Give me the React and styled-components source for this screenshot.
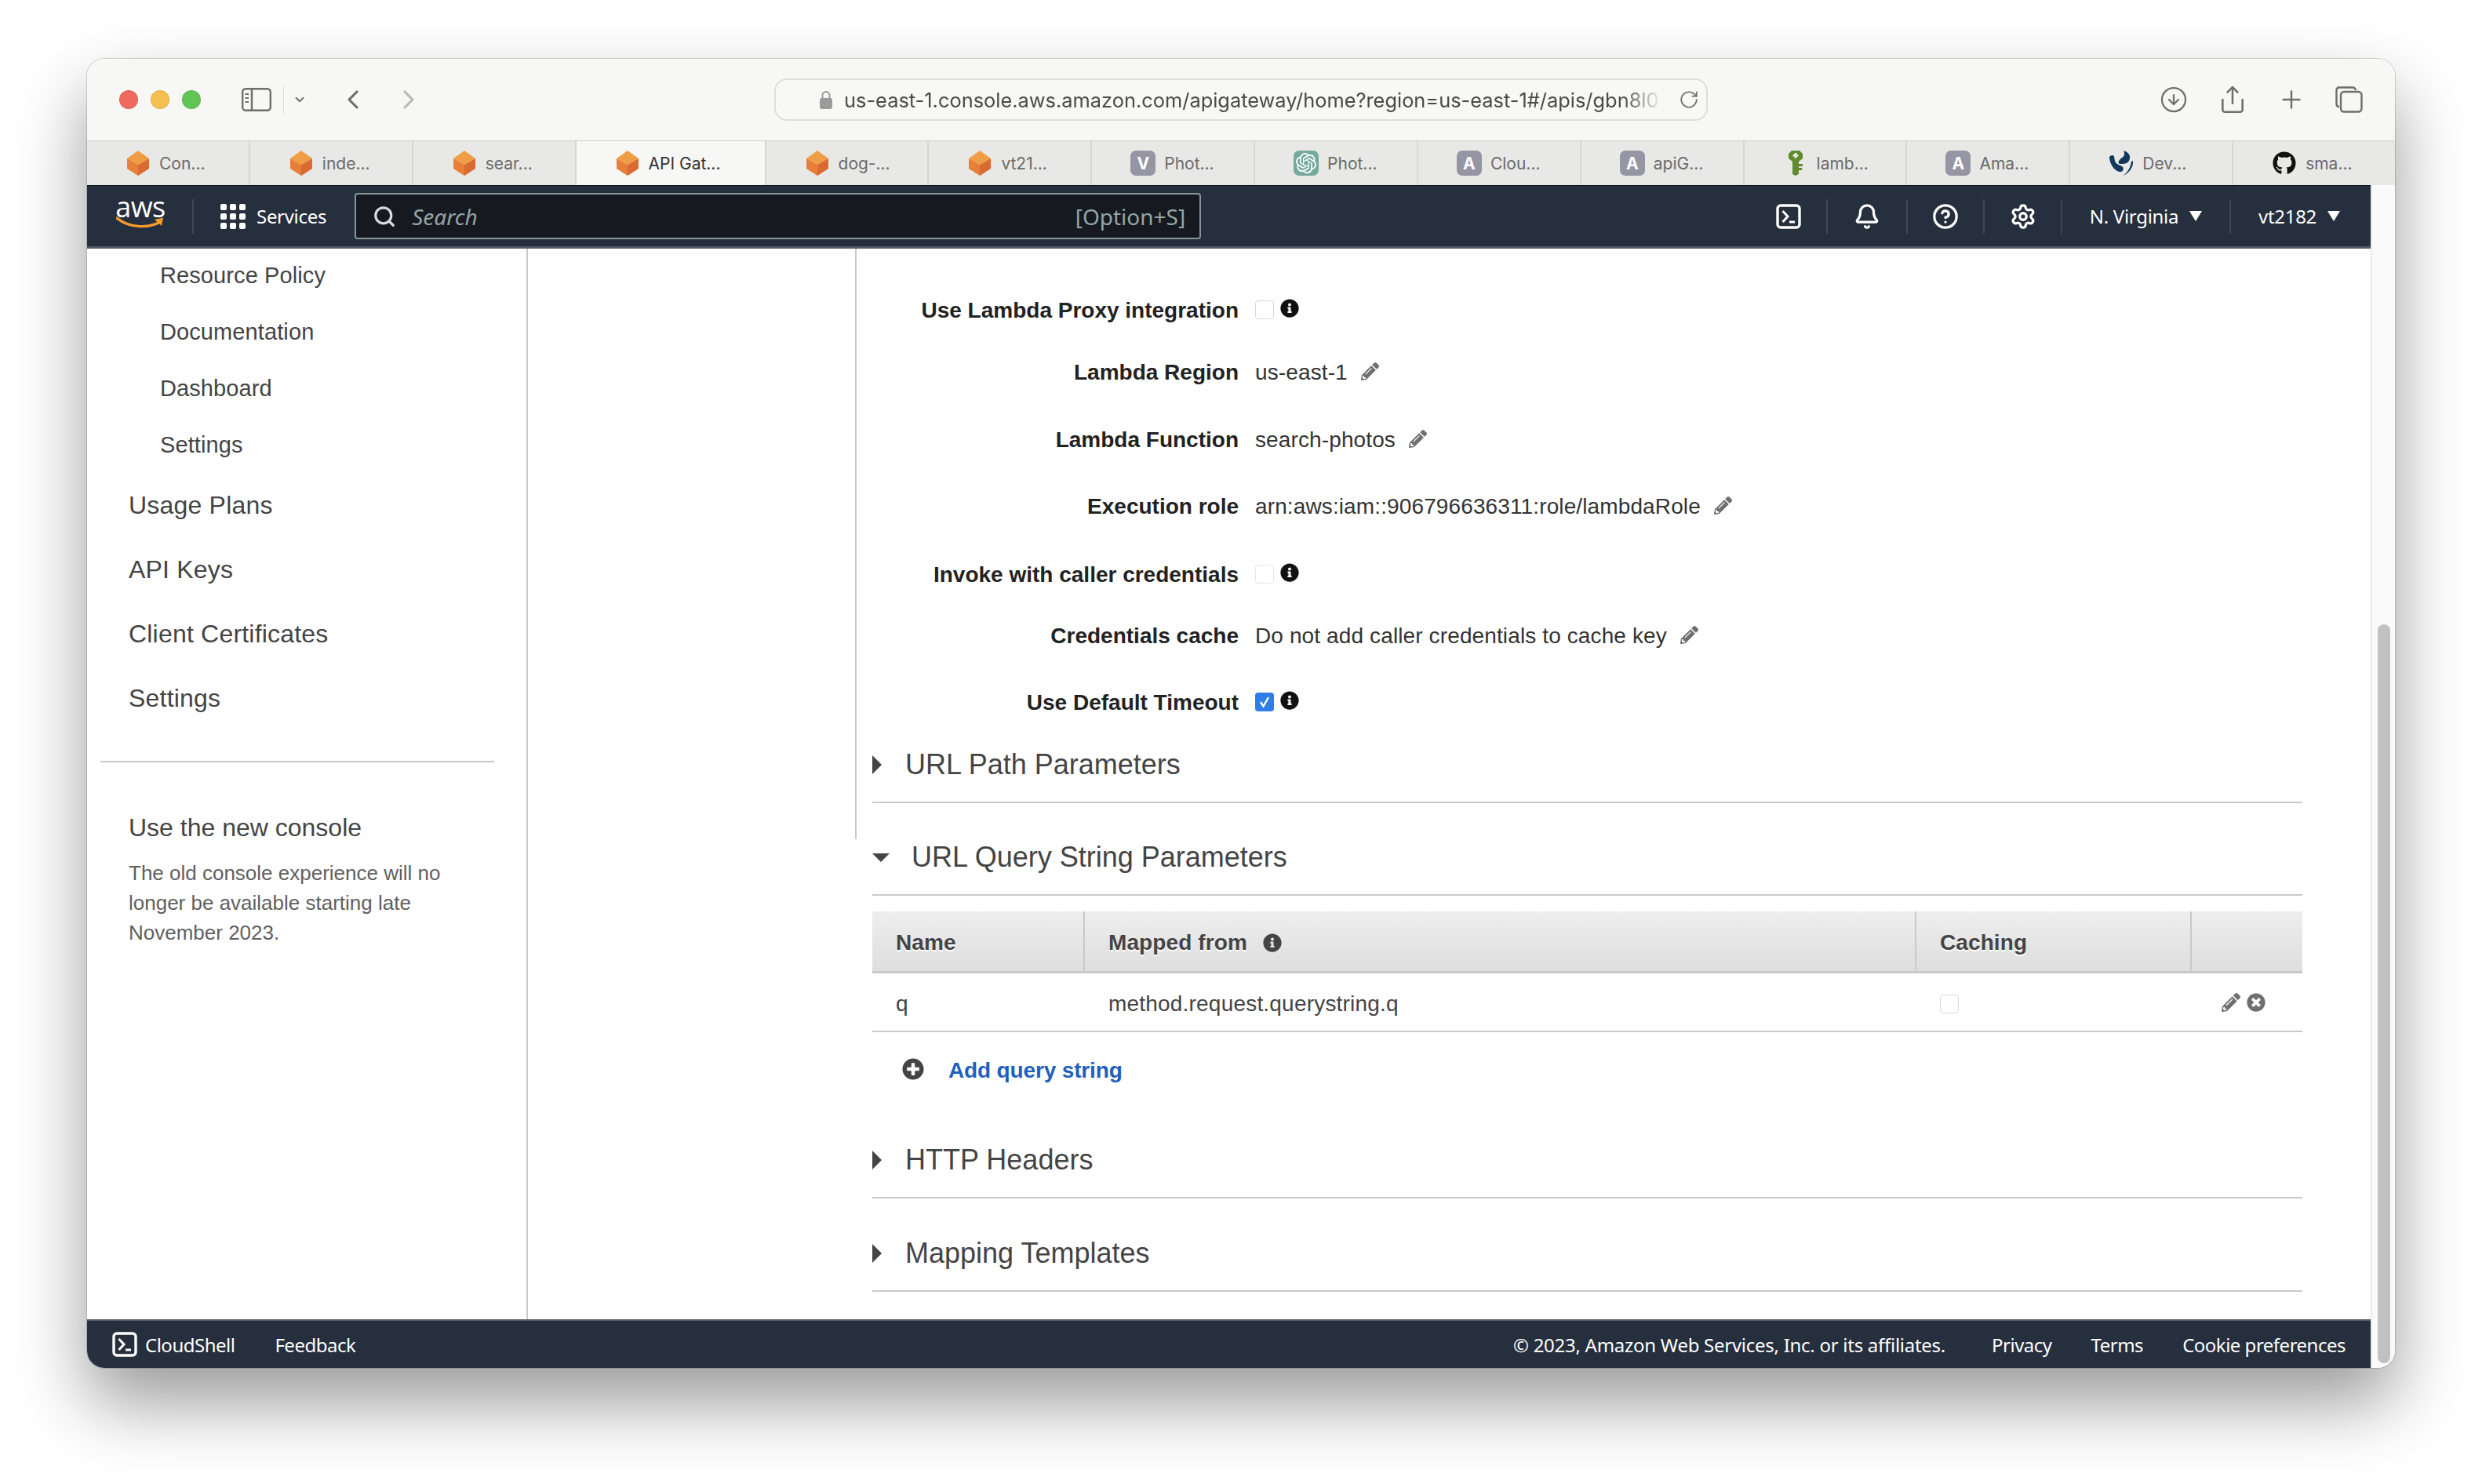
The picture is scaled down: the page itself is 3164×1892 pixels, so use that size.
import React from 'react';
import styled, { createGlobalStyle } from 'styled-components';
import { Bell, CircleHelp, Settings, Plus, Share, CircleArrowDown, ChevronDown, ChevronLeft, ChevronRight, RotateCw, Search } from 'lucide-react';
import { FaInfoCircle, FaPencilAlt, FaPlusCircle, FaTimesCircle, FaGithub } from 'react-icons/fa';
import { SiOpenai } from 'react-icons/si';

const tabs = [
    { id: 1, title: 'Con...', icon: 'cube' },
    { id: 2, title: 'inde...', icon: 'cube' },
    { id: 3, title: 'sear...', icon: 'cube' },
    { id: 4, title: 'API Gat...', icon: 'cube', active: true },
    { id: 5, title: 'dog-...', icon: 'cube' },
    { id: 6, title: 'vt21...', icon: 'cube' },
    { id: 7, title: 'Phot...', icon: 'V' },
    { id: 8, title: 'Phot...', icon: 'openai' },
    { id: 9, title: 'Clou...', icon: 'A' },
    { id: 10, title: 'apiG...', icon: 'A' },
    { id: 11, title: 'lamb...', icon: 'key' },
    { id: 12, title: 'Ama...', icon: 'A' },
    { id: 13, title: 'Dev...', icon: 'swirl' },
    { id: 14, title: 'sma...', icon: 'github' },
];

const subItems = ['Resource Policy', 'Documentation', 'Dashboard', 'Settings'];
const mainItems = ['Usage Plans', 'API Keys', 'Client Certificates', 'Settings'];

const fields = [
    { label: 'Use Lambda Proxy integration', gap: 59, check: 'off' },
    { label: 'Lambda Region', gap: 39, value: 'us-east-1' },
    { label: 'Lambda Function', gap: 46, value: 'search-photos' },
    { label: 'Execution role', gap: 45, value: 'arn:aws:iam::906796636311:role/lambdaRole' },
    { label: 'Invoke with caller credentials', gap: 47, check: 'disabled' },
    { label: 'Credentials cache', gap: 38, value: 'Do not add caller credentials to cache key' },
    { label: 'Use Default Timeout', gap: 45, check: 'on' },
];

const CubeIcon = () => (
    <svg width="28" height="32" viewBox="0 0 28 32">
        <path d="M14 0 L28 10 L14 18 L0 10 Z" fill="#f09e45" />
        <path d="M0 10 L14 18 L14 32 L0 23 Z" fill="#e67f37" />
        <path d="M28 10 L14 18 L14 32 L28 23 Z" fill="#da6a30" />
    </svg>
);

const KeyIcon = () => (
    <svg width="20" height="32" viewBox="0 0 20 32">
        <path d="M5 0 H15 L19 4 V10 L14 14 V17 H19 V20 H14 V22 H18 V25 H14 V30 L10 32 L6 30 V14 L1 10 V4 Z" fill="#5f8b2e" />
        <path d="M8.6 3 H11.4 V5 H13.4 V7.6 H11.4 V9.6 H8.6 V7.6 H6.6 V5 H8.6 Z" fill="#eef2e6" />
    </svg>
);

const SwirlIcon = () => (
    <svg width="32" height="32" viewBox="0 0 32 32">
        <path d="M19 0 C26 2 29 7 26 13 C24 17 19 17 15 17 C12 17 12 14 14 12 C16 9 20 8 20 5 C20 3 20 1 19 0 Z" fill="#12385a" />
        <path d="M1 9 C1 7 3 6 5 6 C8 6 7 10 8 13 C9 17 13 18 17 20 C20 22 19 26 16 27 C10 28 2 20 1 9 Z" fill="#12385a" />
        <path d="M31 13 C32 21 26 29 18 32 C24 28 28 22 29 14 Z" fill="#12385a" />
    </svg>
);

const TerminalIcon = () => (
    <svg width="32" height="32" viewBox="0 0 32 32" fill="none" stroke="#fff">
        <rect x="2" y="2" width="28" height="28" rx="4" strokeWidth="3.4" />
        <path d="M8.5 9 L15 16 L8.5 23" strokeWidth="3" />
        <path d="M17 23 H24" strokeWidth="3" />
    </svg>
);

const GridIcon = () => (
    <svg width="32" height="32" viewBox="0 0 32 32" fill="#fff">
        {[0, 12, 24].map(y => [0, 12, 24].map(x => (
            <rect key={`${x}-${y}`} x={x} y={y} width="8" height="8" rx="2" />
        )))}
    </svg>
);

const SidebarIcon = () => (
    <svg width="38" height="30" viewBox="0 0 38 30" fill="none" stroke="#6e6e6e" strokeWidth="2.4">
        <rect x="1.2" y="1.2" width="35.6" height="27.6" rx="4" />
        <path d="M13 1 V29" />
        <path d="M4.5 8 H9 M4.5 13 H9 M4.5 18 H9" strokeWidth="2" />
    </svg>
);

const LockIcon = () => (
    <svg width="16" height="24" viewBox="0 0 16 24">
        <path d="M3.5 11 V6.5 a4.5 4.5 0 0 1 9 0 V11" fill="none" stroke="#9b9b9b" strokeWidth="2" />
        <rect y="10" width="16" height="14" rx="2.4" fill="#9b9b9b" />
    </svg>
);

const TabsIcon = () => (
    <svg width="35" height="34" viewBox="0 0 35 34" fill="none" stroke="#6e6e6e" strokeWidth="2.4">
        <path d="M5 26 C2.5 26 1.5 25 1.5 22.5 V5 C1.5 2.8 2.8 1.5 5 1.5 H22 C24.5 1.5 25.6 2.6 26 5" />
        <rect x="7" y="7" width="26.5" height="25.5" rx="4" />
    </svg>
);

const AwsLogo = () => (
    <LogoWrap>
        <LogoText>aws</LogoText>
        <svg width="62" height="16" viewBox="0 0 62 16">
            <path d="M1 2 C16 14 40 16 56 7" fill="none" stroke="#f29b2c" strokeWidth="3.4" strokeLinecap="round" />
            <path d="M49 4 L60 1.5 L58 12" fill="#f29b2c" />
        </svg>
    </LogoWrap>
);

const TabIcon = ({ kind }) => {
    if (kind === 'cube') return <CubeIcon />;
    if (kind === 'key') return <KeyIcon />;
    if (kind === 'swirl') return <SwirlIcon />;
    if (kind === 'github') return <FaGithub size={30} color="#111" />;
    if (kind === 'openai') return <OpenAiBadge><SiOpenai size={26} color="#fff" /></OpenAiBadge>;
    return <LetterBadge>{kind}</LetterBadge>;
};

const App = () => {
    return (
        <>
            <GlobalStyle />
            <Window>
                <Toolbar>
                    <Lights>
                        <Light $color="#ef6a5f" />
                        <Light $color="#f5bf4f" />
                        <Light $color="#61c554" />
                    </Lights>
                    <SidebarButton>
                        <SidebarIcon />
                    </SidebarButton>
                    <ToolbarDivider />
                    <SmallChevron>
                        <ChevronDown size={18} color="#6e6e6e" strokeWidth={2.4} />
                    </SmallChevron>
                    <HistoryButtons>
                        <ChevronLeft size={40} color="#6e6e6e" strokeWidth={1.9} />
                        <ChevronRight size={40} color="#b8b8b8" strokeWidth={1.9} />
                    </HistoryButtons>
                    <UrlBar>
                        <LockIcon />
                        <UrlText>us-east-1.console.aws.amazon.com/apigateway/home?region=us-east-1#/apis/gbn8l0</UrlText>
                        <RotateCw size={26} color="#6e6e6e" strokeWidth={1.6} />
                    </UrlBar>
                    <ToolbarActions>
                        <CircleArrowDown size={36} color="#6e6e6e" strokeWidth={1.5} />
                        <Share size={38} color="#6e6e6e" strokeWidth={1.6} />
                        <Plus size={36} color="#6e6e6e" strokeWidth={1.6} />
                        <TabsIcon />
                    </ToolbarActions>
                </Toolbar>

                <TabBar>
                    {tabs.map(tab => (
                        <Tab key={tab.id} $active={tab.active}>
                            <TabIconBox><TabIcon kind={tab.icon} /></TabIconBox>
                            <span>{tab.title}</span>
                        </Tab>
                    ))}
                </TabBar>

                <Viewport>
                    <Page>
                        <TopNav>
                            <AwsLogo />
                            <ServicesMenu>
                                <GridIcon />
                                <span>Services</span>
                            </ServicesMenu>
                            <SearchBox>
                                <Search size={30} color="#d5dbdb" strokeWidth={2.6} />
                                <SearchHint>Search</SearchHint>
                                <span>[Option+S]</span>
                            </SearchBox>
                            <NavRight>
                                <NavCell $w={96} $plain><TerminalIcon /></NavCell>
                                <NavCell $w={102}><Bell size={34} color="#fff" strokeWidth={2.3} /></NavCell>
                                <NavCell $w={98}><CircleHelp size={34} color="#fff" strokeWidth={2.3} /></NavCell>
                                <NavCell $w={99}><Settings size={34} color="#fff" strokeWidth={2.3} /></NavCell>
                                <NavCell $w={215}>N. Virginia<Caret /></NavCell>
                                <NavCell $w={180}>vt2182<Caret /></NavCell>
                            </NavRight>
                        </TopNav>

                        <Main>
                            <Sidebar>
                                <SubList>
                                    {subItems.map(item => <SubItem key={item}>{item}</SubItem>)}
                                </SubList>
                                {mainItems.map(item => <MainItem key={item}>{item}</MainItem>)}
                                <SideRule />
                                <ConsoleTitle>Use the new console</ConsoleTitle>
                                <ConsoleNote>
                                    The old console experience will no<br />
                                    longer be available starting late<br />
                                    November 2023.
                                </ConsoleNote>
                            </Sidebar>

                            <TreePane />

                            <MethodPane>
                                <FormBlock>
                                    {fields.map(field => (
                                        <FormRow key={field.label} $gap={field.gap}>
                                            <Label>{field.label}</Label>
                                            <Value>
                                                {field.check ? (
                                                    <>
                                                        <Checkbox $state={field.check}>
                                                            {field.check === 'on' && (
                                                                <svg width="24" height="24" viewBox="0 0 24 24" fill="none" stroke="#fff" strokeWidth="2.4">
                                                                    <path d="M7 12 L10.5 17.5 L17 6" />
                                                                </svg>
                                                            )}
                                                        </Checkbox>
                                                        <InfoMark><FaInfoCircle size={24} color="#111" /></InfoMark>
                                                    </>
                                                ) : (
                                                    <>
                                                        <span>{field.value}</span>
                                                        <PencilMark><FaPencilAlt size={23} color="#6f6f6f" /></PencilMark>
                                                    </>
                                                )}
                                            </Value>
                                        </FormRow>
                                    ))}
                                    <SectionHead $gap={39}>
                                        <ArrowRight />
                                        <SectionTitle>URL Path Parameters</SectionTitle>
                                    </SectionHead>
                                </FormBlock>

                                <Sections>
                                    <SectionHead $gap={3}>
                                        <ArrowDown />
                                        <SectionTitle>URL Query String Parameters</SectionTitle>
                                    </SectionHead>

                                    <ParamTable>
                                        <HeadCell>Name</HeadCell>
                                        <HeadCell>
                                            Mapped from
                                            <HeadInfo><FaInfoCircle size={24} color="#444" /></HeadInfo>
                                        </HeadCell>
                                        <HeadCell>Caching</HeadCell>
                                        <HeadCell $last />
                                        <BodyCell>q</BodyCell>
                                        <BodyCell>method.request.querystring.q</BodyCell>
                                        <BodyCell><TableCheckbox $state="off" /></BodyCell>
                                        <ActionCell>
                                            <FaPencilAlt size={24} color="#6f6f6f" />
                                            <FaTimesCircle size={24} color="#6f6f6f" />
                                        </ActionCell>
                                    </ParamTable>

                                    <AddRow>
                                        <AddIcon><FaPlusCircle size={28} color="#444" /></AddIcon>
                                        <AddLink>Add query string</AddLink>
                                    </AddRow>

                                    <SectionHead $gap={45}>
                                        <ArrowRight />
                                        <SectionTitle>HTTP Headers</SectionTitle>
                                    </SectionHead>
                                    <SectionHead $gap={50}>
                                        <ArrowRight />
                                        <SectionTitle>Mapping Templates</SectionTitle>
                                    </SectionHead>
                                </Sections>
                            </MethodPane>
                        </Main>

                        <Footer>
                            <FooterLeft>
                                <CloudShell>
                                    <TerminalIcon />
                                    <span>CloudShell</span>
                                </CloudShell>
                                <span>Feedback</span>
                            </FooterLeft>
                            <FooterRight>
                                <Copyright>© 2023, Amazon Web Services, Inc. or its affiliates.</Copyright>
                                <span>Privacy</span>
                                <span>Terms</span>
                                <span>Cookie preferences</span>
                            </FooterRight>
                        </Footer>
                    </Page>
                    <ScrollTrack>
                        <ScrollThumb />
                    </ScrollTrack>
                </Viewport>
            </Window>
        </>
    );
};

export default App;

const GlobalStyle = createGlobalStyle`
html, body {
    margin: 0;
    padding: 0;
    background: #fff;
}
body {
    width: 3164px;
    height: 1892px;
    overflow: hidden;
    font-family: "Liberation Sans", Arial, sans-serif;
}
* {
    box-sizing: border-box;
}
`;

const Window = styled.div`
display: flex;
flex-direction: column;
width: 2942px;
height: 1669px;
margin: 75px 0 0 111px;
border-radius: 22px;
overflow: hidden;
background: #fff;
box-shadow: 0 0 0 1px rgba(0, 0, 0, 0.16), 0 44px 90px rgba(0, 0, 0, 0.4);
`;

const Toolbar = styled.div`
display: flex;
align-items: center;
flex: none;
height: 105px;
padding-left: 41px;
background: #f7f7f5;
border-bottom: 1px solid #cfcfcd;
`;

const Lights = styled.div`
display: flex;
gap: 16px;
`;

const Light = styled.div`
width: 24px;
height: 24px;
border-radius: 50%;
background: ${props => props.$color};
box-shadow: inset 0 0 0 1px rgba(0, 0, 0, 0.08);
`;

const SidebarButton = styled.div`
display: flex;
margin-left: 52px;
`;

const ToolbarDivider = styled.div`
width: 1px;
height: 35px;
margin-left: 15px;
background: #dcdcdc;
`;

const SmallChevron = styled.div`
display: flex;
margin-left: 11px;
`;

const HistoryButtons = styled.div`
display: flex;
gap: 31px;
margin-left: 39px;
`;

const UrlBar = styled.div`
display: flex;
align-items: center;
width: 1190px;
height: 54px;
margin-left: 446px;
padding: 0 9px 0 56px;
border: 2px solid #dedede;
border-radius: 16px;
background: #f8f8f6;
`;

const UrlText = styled.div`
flex: 1;
margin: 0 20px 0 15px;
overflow: hidden;
white-space: nowrap;
font-family: "Inter", sans-serif;
font-size: 25.4px;
color: #4a4a4a;
-webkit-mask-image: linear-gradient(to right, #000 95%, transparent 100%);
mask-image: linear-gradient(to right, #000 95%, transparent 100%);
`;

const ToolbarActions = styled.div`
display: flex;
align-items: center;
gap: 38px;
margin-left: 576px;
`;

const TabBar = styled.div`
display: flex;
flex: none;
height: 56px;
background: #e8e8e6;
`;

const Tab = styled.div`
display: flex;
align-items: center;
gap: 11px;
flex: ${props => (props.$active ? '0 0 242px' : '1')};
padding-left: 49px;
background: ${props => (props.$active ? '#f7f7f5' : 'transparent')};
border-right: 2px solid #d6d6d4;
font-family: "Inter", sans-serif;
font-size: 21px;
color: ${props => (props.$active ? '#333' : '#6a6a6a')};
white-space: nowrap;
&:last-child {
    border-right: none;
}
`;

const TabIconBox = styled.div`
display: flex;
align-items: center;
justify-content: center;
width: 32px;
height: 32px;
flex: none;
`;

const LetterBadge = styled.div`
display: flex;
align-items: center;
justify-content: center;
width: 32px;
height: 32px;
border-radius: 7px;
background: #9595a4;
font-size: 21px;
font-weight: bold;
color: #fff;
`;

const OpenAiBadge = styled(LetterBadge)`
background: #74aa9c;
`;

const Viewport = styled.div`
display: flex;
flex: 1;
min-height: 0;
`;

const Page = styled.div`
display: flex;
flex-direction: column;
width: 2911px;
flex: none;
`;

const TopNav = styled.div`
display: flex;
align-items: center;
flex: none;
height: 81px;
padding-left: 37px;
background: #262f3e;
border-top: 1px solid #10151d;
border-bottom: 3px solid #545b64;
font-family: "Noto Sans", sans-serif;
font-size: 24px;
letter-spacing: -0.3px;
color: #fff;
`;

const LogoWrap = styled.div`
display: flex;
flex-direction: column;
align-items: center;
width: 62px;
flex: none;
`;

const LogoText = styled.div`
margin-top: -14px;
margin-bottom: -7px;
font-family: "Open Sans", sans-serif;
font-size: 36px;
line-height: 38px;
letter-spacing: -0.5px;
color: #fff;
`;

const ServicesMenu = styled.div`
display: flex;
align-items: center;
gap: 14px;
height: 44px;
margin-left: 35px;
padding-left: 34px;
border-left: 2px solid #414750;
`;

const SearchBox = styled.div`
display: flex;
align-items: center;
gap: 20px;
width: 1079px;
height: 59px;
margin-left: 36px;
padding: 0 18px 0 21px;
border: 2px solid #879596;
border-radius: 4px;
background: #16191f;
font-size: 28px;
letter-spacing: 0;
color: #95a5a6;
`;

const SearchHint = styled.span`
flex: 1;
font-style: italic;
`;

const NavRight = styled.div`
display: flex;
align-items: center;
margin-left: auto;
`;

const NavCell = styled.div`
display: flex;
align-items: center;
justify-content: center;
gap: 14px;
width: ${props => props.$w}px;
height: 44px;
border-left: ${props => (props.$plain ? 'none' : '2px solid #414750')};
&:last-child {
    padding-right: 4px;
}
`;

const Caret = styled.span`
width: 0;
height: 0;
border-left: 8px solid transparent;
border-right: 8px solid transparent;
border-top: 13px solid #fff;
`;

const Main = styled.div`
display: flex;
flex: 1;
min-height: 0;
overflow: hidden;
`;

const Sidebar = styled.div`
width: 562px;
flex: none;
padding: 0 41px 0 17px;
border-right: 2px solid #c9c9c9;
font-size: 32px;
color: #444;
`;

const SubList = styled.div`
margin-top: -2px;
padding-left: 76px;
`;

const SubItem = styled.div`
display: flex;
align-items: center;
height: 72px;
font-size: 29px;
letter-spacing: 0.1px;
color: #444;
`;

const MainItem = styled.div`
display: flex;
align-items: center;
height: 82px;
padding-left: 36px;
letter-spacing: 0.2px;
`;

const SideRule = styled.div`
height: 2px;
margin-top: 39px;
background: #c9c9c9;
`;

const ConsoleTitle = styled.div`
margin-top: 63px;
padding-left: 36px;
line-height: 40px;
`;

const ConsoleNote = styled.div`
margin-top: 19px;
padding-left: 36px;
font-size: 26px;
line-height: 38px;
color: #5f5f5f;
`;

const TreePane = styled.div`
width: 417px;
flex: none;
`;

const MethodPane = styled.div`
width: 1845px;
flex: none;
`;

const FormBlock = styled.div`
display: flow-root;
height: 753px;
padding-left: 20px;
border-left: 2px solid #c9c9c9;
`;

const FormRow = styled.div`
display: grid;
grid-template-columns: 467px 1fr;
column-gap: 21px;
align-items: center;
height: 40px;
margin-top: ${props => props.$gap}px;
font-size: 28px;
line-height: 40px;
`;

const Label = styled.div`
text-align: right;
font-weight: bold;
color: #222;
`;

const Value = styled.div`
display: flex;
align-items: center;
letter-spacing: 0.12px;
color: #333;
`;

const Checkbox = styled.div`
display: flex;
width: 24px;
height: 24px;
border-radius: 4px;
background: ${props => (props.$state === 'on' ? '#2f7de6' : '#fff')};
border: ${props => (props.$state === 'on' ? 'none' : '1.5px solid #d8d8d8')};
opacity: ${props => (props.$state === 'disabled' ? 0.6 : 1)};
margin-top: -3px;
`;

const TableCheckbox = styled(Checkbox)`
margin-top: 0;
`;

const InfoMark = styled.span`
display: flex;
margin: -6px 0 0 8px;
`;

const PencilMark = styled.span`
display: flex;
margin: -4px 0 0 17px;
`;

const Sections = styled.div`
display: flow-root;
padding-left: 22px;
`;

const SectionHead = styled.div`
display: flex;
align-items: center;
height: 69px;
margin-top: ${props => props.$gap}px;
padding-bottom: 27px;
border-bottom: 2px solid #c9c9c9;
`;

const SectionTitle = styled.div`
font-size: 36px;
line-height: 40px;
color: #444;
`;

const ArrowRight = styled.span`
width: 0;
height: 0;
margin-right: 30px;
border-top: 12px solid transparent;
border-bottom: 12px solid transparent;
border-left: 12px solid #444;
`;

const ArrowDown = styled.span`
width: 0;
height: 0;
margin-right: 28px;
border-left: 11px solid transparent;
border-right: 11px solid transparent;
border-top: 11px solid #444;
`;

const ParamTable = styled.div`
display: grid;
grid-template-columns: 271px 1060px 351px 141px;
grid-template-rows: 79px 75px;
margin-top: 20px;
font-size: 28px;
`;

const HeadCell = styled.div`
display: flex;
align-items: center;
padding: 3px 0 0 30px;
background: linear-gradient(#eeeeee, #dedede);
border-bottom: 3px solid #c9c9c9;
border-right: ${props => (props.$last ? 'none' : '2px solid #c9c9c9')};
font-weight: bold;
letter-spacing: 0.1px;
color: #444;
text-shadow: 0 2px 0 #fff;
`;

const HeadInfo = styled.span`
display: flex;
margin-left: 20px;
`;

const BodyCell = styled.div`
display: flex;
align-items: center;
padding: 4px 0 0 30px;
border-bottom: 2px solid #c9c9c9;
letter-spacing: 0.2px;
color: #444;
`;

const ActionCell = styled(BodyCell)`
gap: 8px;
padding: 0 0 0 38px;
`;

const AddRow = styled.div`
display: flex;
align-items: center;
gap: 31px;
height: 98px;
padding-left: 38px;
`;

const AddIcon = styled.span`
display: flex;
margin-top: -4px;
`;

const AddLink = styled.span`
font-size: 28px;
font-weight: bold;
letter-spacing: -0.15px;
color: #1f5fbf;
`;

const Footer = styled.div`
display: flex;
align-items: center;
justify-content: space-between;
flex: none;
height: 62px;
padding: 0 32px;
background: #262f3e;
border-top: 2px solid #545b64;
font-family: "Noto Sans", sans-serif;
font-size: 24px;
letter-spacing: -0.5px;
color: #fff;
`;

const FooterLeft = styled.div`
display: flex;
align-items: center;
gap: 51px;
`;

const CloudShell = styled.div`
display: flex;
align-items: center;
gap: 10px;
`;

const FooterRight = styled.div`
display: flex;
align-items: center;
gap: 50px;
`;

const Copyright = styled.span`
margin-right: 9px;
letter-spacing: -0.27px;
`;

const ScrollTrack = styled.div`
display: flex;
flex: 1;
justify-content: center;
padding: 560px 0 6px;
background: #fafafa;
border-left: 2px solid #e8e8e8;
`;

const ScrollThumb = styled.div`
width: 16px;
height: 100%;
border-radius: 8px;
background: #c1c1c1;
`;
